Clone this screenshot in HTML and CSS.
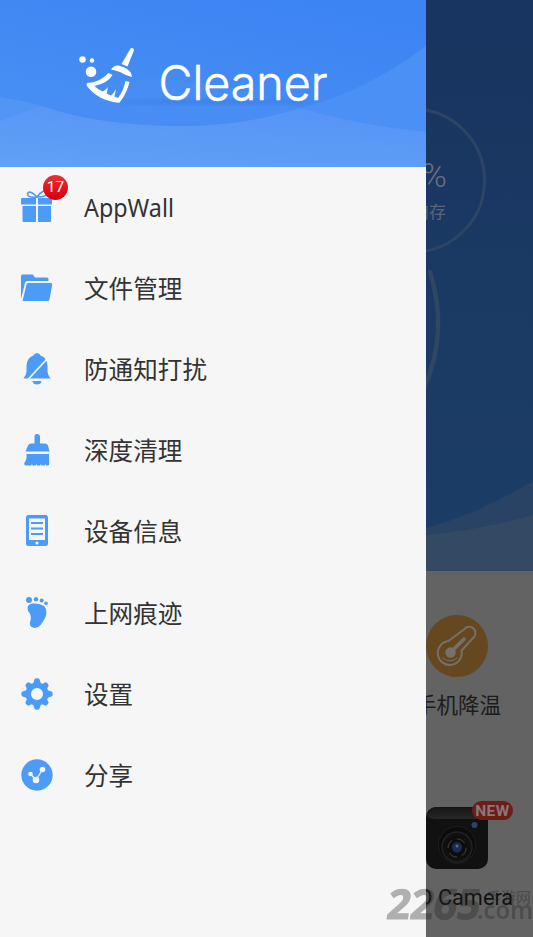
FILE: index.html
```html
<!DOCTYPE html>
<html lang="zh-CN">
<head>
<meta charset="utf-8">
<title>Cleaner</title>
<link rel="stylesheet" href="styles.css">
</head>
<body>
<div class="screen">
  <main class="home">
    <svg class="hero" viewBox="0 0 533 571">
      <defs>
        <linearGradient id="heroBg" x1="0" y1="0" x2="0" y2="1">
          <stop offset="0" stop-color="#183460"/><stop offset="1" stop-color="#1c3e66"/>
        </linearGradient>
      </defs>
      <rect width="533" height="571" fill="url(#heroBg)"/>
      <path d="M426 528Q480 513 533 481V571H426Z" fill="#284363"/>
      <path d="M426 535Q480 530 533 515V571H426Z" fill="#344963"/>
      <circle cx="413" cy="180.500" r="71.500" fill="none" stroke="#2d4565" stroke-width="3"/>
      <path d="M430 272Q449 332 424 388" fill="none" stroke="#304763" stroke-width="4.500" stroke-linecap="round"/>
      <text class="percent" x="447" y="187" text-anchor="end">%</text>
      <text class="memory" x="446" y="218" text-anchor="end">内存</text>
    </svg>
    <section class="tools">
      <div class="tool">
        <svg class="tool-icon" viewBox="0 0 62 62">
          <circle cx="31" cy="31" r="31" fill="#65481f"/>
          <g fill="none" stroke="#777069" stroke-width="2" stroke-linecap="round" stroke-linejoin="round">
            <path d="M22.500 26L38.500 14A5.600 5.600 0 0 1 48 22L35.500 35.500A12 12 0 1 1 22.500 26Z"/>
            <path d="M26 36L38 24" stroke-width="3.500"/>
            <path d="M17 43Q24 49 31 43" stroke-width="1"/>
          </g>
          <circle cx="24.500" cy="37.500" r="5.200" fill="#777069"/>
        </svg>
        <span class="tool-name">手机降温</span>
      </div>
      <div class="tool camera">
        <svg class="tool-icon" viewBox="0 0 62 62">
          <defs>
            <linearGradient id="lid" x1="0" y1="0" x2="0" y2="1"><stop offset="0" stop-color="#161616"/><stop offset="1" stop-color="#272727"/></linearGradient>
            <radialGradient id="lens"><stop offset="0" stop-color="#30476f"/><stop offset=".3" stop-color="#14213c"/><stop offset=".4" stop-color="#0b0b0b"/><stop offset="1" stop-color="#121212"/></radialGradient>
          </defs>
          <rect width="62" height="62" rx="10" fill="#111"/>
          <path d="M10 0H52Q60 2 61 10Q57 12 51 12H10Q4 12 1 9Q4 1 10 0Z" fill="url(#lid)"/>
          <circle cx="31" cy="38" r="18.500" fill="#0b0b0b" stroke="#1d1d1d"/>
          <circle cx="31" cy="40" r="15" fill="url(#lens)" stroke="#222" stroke-width="1.500"/>
          <circle cx="31" cy="41" r="9" fill="none" stroke="#444" stroke-dasharray="9 5"/>
          <circle cx="31" cy="41" r="4.500" fill="#1b2d50"/>
          <circle cx="31" cy="39" r="1.500" fill="#526a91"/>
          <circle cx="48.500" cy="18" r="3" fill="#28446e"/>
        </svg>
        <span class="new">NEW</span>
        <span class="tool-name">HD Camera</span>
      </div>
    </section>
  </main>

  <aside class="drawer">
    <svg class="banner" viewBox="0 0 426 167">
      <defs>
        <linearGradient id="bannerBg" x1="0.15" y1="1" x2="0.7" y2="0">
          <stop offset="0" stop-color="#4a92f4"/><stop offset="1" stop-color="#3d84f3"/>
        </linearGradient>
        <linearGradient id="front" x1="0" y1="1" x2=".5" y2="0"><stop offset="0" stop-color="#61a1f6"/><stop offset="1" stop-color="#5695f5"/></linearGradient>
        <filter id="soft"><feGaussianBlur stdDeviation="5 2"/></filter>
      </defs>
      <rect width="426" height="167" fill="url(#bannerBg)"/>
      <path d="M0 97Q20 100 42 106Q95 80 155 79Q220 80 300 108Q365 92 426 46V167H0Z" fill="#4b90f4"/>
      <path d="M42 106Q95 80 155 79Q220 80 300 108Q240 127 180 126Q100 126 42 106Z" fill="#478df3"/>
      <path d="M0 97Q20 100 42 106Q20 113 0 121Z" fill="#5196f5"/>
      <path d="M0 121Q20 113 42 106Q100 126 180 126Q240 127 300 108Q360 126 426 132V167H0Z" fill="url(#front)"/>
      <ellipse cx="215" cy="102" rx="100" ry="3" fill="#3578e5" opacity=".45" filter="url(#soft)"/>
      <g fill="#fff">
        <circle cx="82.500" cy="59.500" r="3.200"/><circle cx="92" cy="60.500" r="2.200"/><circle cx="91" cy="71.700" r="5.300"/>
        <path d="M130.500 48.500Q132 47.500 133.500 48.800Q134.300 49.500 133.700 51L127.500 66.500L121.500 64Z"/>
        <path d="M111 69.500Q114 65 118.500 65.500Q132 69 131.800 77Q125 75 120 72Q115 70 111 69.500Z"/>
        <path d="M108.500 73L112.500 75Q108 83 94.500 86Q98 89.500 102.500 91.500Q106 90 108 87L106.800 93.500Q109 95 111 95.500Q114 93 116 89L114.500 96.500L118 98Q123.500 91 125.500 81L129.500 82Q126.500 94 119.500 102.800Q98 101 86.500 85.500L87 83Q100 82.500 108.500 73Z"/>
      </g>
      <text class="brand" x="158.500" y="99.500" textLength="169" lengthAdjust="spacingAndGlyphs">Cleaner</text>
    </svg>

    <nav class="menu">
      <a class="item">
        <span class="icon-wrap gift">
          <svg class="icon" viewBox="0 0 34 34">
            <path d="M1 11Q1 10 2 10H16V16.500H1ZM18 10H31Q32 10 32 11V16.500H18ZM2.500 18H16V34H3.500Q2.500 34 2.500 33ZM18 18H31V33Q31 34 30 34H18Z"/>
            <path d="M17 9Q8 10 7.500 6Q9 1 17 9Q24 0 27.500 4Q28 9 17 9" fill="none" stroke="#4c9bf6" stroke-width="1.600"/>
          </svg>
          <span class="count">17</span>
        </span>
        <svg class="label-latin" viewBox="0 0 96 36"><text x="0" y="26" textLength="90" lengthAdjust="spacingAndGlyphs">AppWall</text></svg>
      </a>
      <a class="item"><span class="icon-wrap"><svg class="icon" viewBox="0 0 34 34">
        <path d="M1 5Q1 3.500 2.500 3.500H13L15 6.500H27Q28.500 6.500 28.500 8V10H7.500Q5.500 10 5 12L1 28Z"/>
        <path d="M8 12H31Q32.500 12 32.200 13.500L29.500 28.500Q29 30 27.500 30H2.500L6.500 13.500Q6.900 12 8 12Z"/>
      </svg></span><span class="label">文件管理</span></a>
      <a class="item"><span class="icon-wrap"><svg class="icon" viewBox="0 0 34 34">
        <path d="M17 1Q19.500 1 20.500 3.500Q27.500 6 27.500 14V20Q28 23.500 30.500 26.500H3.500Q6 23.500 6.500 20V14Q6.500 6 13.500 3.500Q14.500 1 17 1Z"/>
        <path d="M12.500 29H21.500Q21 32.500 17 32.500T12.500 29Z"/><path d="M8 27.500L27 7" stroke="#f6f6f6" stroke-width="1.700"/>
      </svg></span><span class="label">防通知打扰</span></a>
      <a class="item"><span class="icon-wrap"><svg class="icon" viewBox="0 0 34 34">
        <path d="M14.500 3Q14.500 1 17 1T20 3V10.500H25Q27 10.500 28 12.500L29.500 18.500H5.500L8 12.500Q9 10.500 11 10.500H14.500Z"/>
        <path d="M6.500 21H29L29.200 31.500Q29 32.500 27.500 32.500H26L25.500 31L24.500 32.500H21.500L21 31L20 32.500H17L16.500 31L15.500 32.500H12.500L12 31L11 32.500H6Q3.500 32 4.500 29.500Q7 27 6.500 21Z"/>
      </svg></span><span class="label">深度清理</span></a>
      <a class="item"><span class="icon-wrap"><svg class="icon" viewBox="0 0 34 34">
        <rect x="6" y="1" width="22" height="31" rx="2.500"/><rect x="9" y="4.500" width="16" height="21.500" fill="#f6f6f6"/>
        <path d="M11 9H23M11 14.500H23M11 20H23" stroke="#4c9bf6" stroke-width="2"/><circle cx="17" cy="29" r="1.600" fill="#f6f6f6"/>
      </svg></span><span class="label">设备信息</span></a>
      <a class="item"><span class="icon-wrap"><svg class="icon" viewBox="0 0 34 34">
        <circle cx="9" cy="4" r="3"/><circle cx="16" cy="3.300" r="2.200"/><circle cx="21.700" cy="4.500" r="2"/><circle cx="26" cy="7.200" r="1.800"/>
        <path d="M7.500 12Q7.500 8 13 7.500Q20 7 24 10Q28 14 25.500 21Q23.500 25 20.500 29Q18 32.500 13.500 31.800Q9 30.500 10 26Q12 21 9.500 17Q7.500 15 7.500 12Z"/>
      </svg></span><span class="label">上网痕迹</span></a>
      <a class="item"><span class="icon-wrap"><svg class="icon" viewBox="-17 -17 34 34">
        <circle r="8.800" fill="none" stroke="#4c9bf6" stroke-width="5.500"/>
        <g id="teeth"><path d="M-4 -10L-2.600 -14.500Q-2.400 -15.700 0 -15.700T2.600 -14.500L4 -10ZM-4 10L-2.600 14.500Q-2.400 15.700 0 15.700T2.600 14.500L4 10ZM-10 -4L-14.500 -2.600Q-15.700 -2.400 -15.700 0T-14.500 2.600L-10 4ZM10 -4L14.500 -2.600Q15.700 -2.400 15.700 0T14.500 2.600L10 4Z"/></g>
        <use href="#teeth" transform="rotate(45) scale(.95)"/>
      </svg></span><span class="label">设置</span></a>
      <a class="item"><span class="icon-wrap"><svg class="icon" viewBox="0 0 34 34">
        <circle cx="17" cy="17" r="15.700"/><path d="M10.500 16L16 22L22.500 11.500" fill="none" stroke="#f6f6f6" stroke-width="1.200"/>
        <g fill="#f6f6f6"><circle cx="10.500" cy="16" r="2.300"/><circle cx="16" cy="22" r="3.300"/><circle cx="22.500" cy="11.500" r="2.800"/></g>
      </svg></span><span class="label">分享</span></a>
    </nav>
  </aside>

  <div class="watermark">
    <svg viewBox="0 0 150 46">
      <text class="wm-num" x="8" y="35" textLength="93" lengthAdjust="spacingAndGlyphs" transform="skewX(-9)">2265</text>
      <text class="wm-cn" x="103" y="19" textLength="45">手游网</text>
      <text class="wm-com" x="94" y="35" textLength="56" lengthAdjust="spacingAndGlyphs">.com</text>
    </svg>
  </div>
</div>
</body>
</html>
```
FILE: styles.css
```css
* { box-sizing: border-box; }
body { margin: 0; font-family: "Noto Sans", "Noto Sans CJK SC", sans-serif; }
.screen { position: relative; width: 533px; height: 937px; overflow: hidden; background: #636363; }
.home { display: flex; flex-direction: column; height: 100%; }
.hero { display: block; width: 533px; height: 571px; flex: none; }
.percent { font: 300 34px Roboto, sans-serif; fill: #6b7076; }
.memory { font: 17px "Noto Sans CJK SC", sans-serif; fill: #5b6672; }
.tools { display: grid; grid-template-rows: 192px 174px; justify-content: end; grid-template-columns: 152px; }
.tool { position: relative; display: flex; flex-direction: column; align-items: center; padding-top: 44px; }
.tool-icon { display: block; width: 62px; height: 62px; }
.tool-name { margin: 13px 0 0 2px; font: 21.5px/32px Roboto, "Noto Sans CJK SC", sans-serif; color: #1c1c1c; white-space: nowrap; }
.camera .tool-name { margin: 13px 0 0 2px; font-size: 21.7px; color: #111; }
.new { position: absolute; left: 91px; top: 38px; width: 41px; height: 19px; border-radius: 10px; background: #6c1d18; color: #8b7774; font: 700 15.5px/20px Roboto, sans-serif; letter-spacing: .4px; text-align: center; }
.drawer { position: absolute; inset: 0 auto 0 0; width: 426px; background: #f6f6f6; display: flex; flex-direction: column; }
.banner { display: block; width: 426px; height: 167px; flex: none; }
.brand { font: 300 48px Inter, sans-serif; fill: #fff; stroke: #fff; stroke-width: .6px; }
.menu { display: flex; flex-direction: column; }
.item { display: flex; align-items: center; height: 81.1px; padding: 0 0 1px 20px; gap: 30px; }
.icon-wrap { position: relative; width: 34px; height: 34px; }
.gift { margin-bottom: 5px; }
.icon { display: block; width: 34px; height: 34px; fill: #4c9bf6; }
.count { position: absolute; left: 23px; top: -13px; width: 25px; height: 25px; border-radius: 50%; background: linear-gradient(#ec3036, #d40008); color: #fff; font: 15.5px/25px Roboto, sans-serif; text-align: center; }
.label { margin-bottom: 2px; font: 24.6px/36px "Noto Sans CJK SC", sans-serif; color: #333; white-space: nowrap; }
.label-latin { width: 96px; height: 36px; font: 25px "Noto Sans", sans-serif; fill: #333; margin-top: 3px; }
.watermark { position: absolute; left: 383px; top: 884px; width: 150px; height: 46px; }
.watermark svg { display: block; width: 150px; height: 46px; fill: #222; opacity: .33; }
.wm-num { font: 700 41px "Noto Sans", sans-serif; stroke: #222; stroke-width: 1.2px; stroke-linejoin: round; }
.wm-cn { font: 500 15px "Noto Sans CJK SC", sans-serif; }
.wm-com { font: 600 25px "Noto Sans", sans-serif; }
```
